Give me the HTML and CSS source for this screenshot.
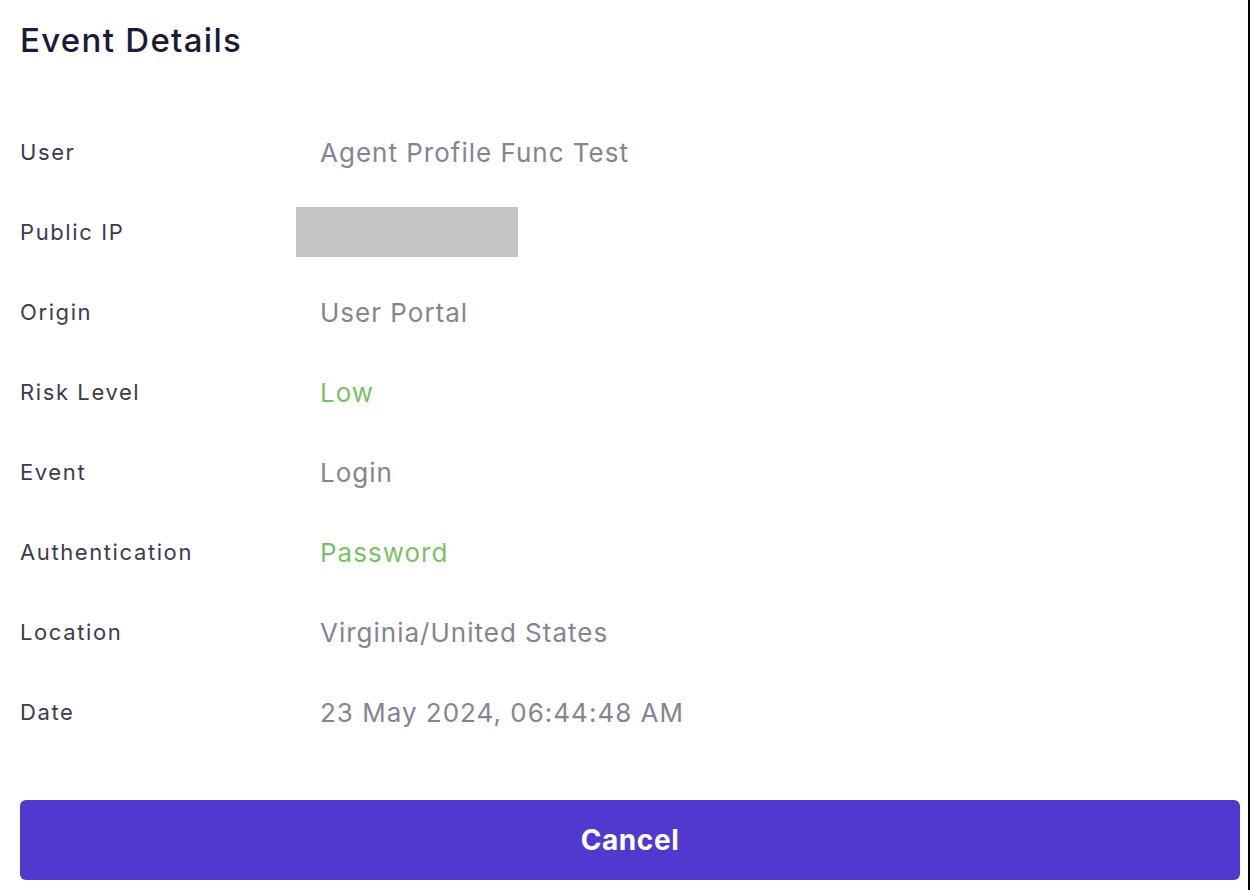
FILE: index.html
```html
<!DOCTYPE html>
<html lang="en">
<head>
<meta charset="utf-8">
<title>Event Details</title>
<link rel="stylesheet" href="styles.css">
</head>
<body>
<div class="panel">
  <h1 class="title">Event Details</h1>
  <dl class="details">
    <div class="row"><dt class="label">User</dt><dd class="value">Agent Profile Func Test</dd></div>
    <div class="row"><dt class="label">Public IP</dt><dd class="value"><span class="redacted"></span></dd></div>
    <div class="row"><dt class="label">Origin</dt><dd class="value">User Portal</dd></div>
    <div class="row"><dt class="label">Risk Level</dt><dd class="value value-good">Low</dd></div>
    <div class="row"><dt class="label">Event</dt><dd class="value">Login</dd></div>
    <div class="row"><dt class="label">Authentication</dt><dd class="value value-good">Password</dd></div>
    <div class="row"><dt class="label">Location</dt><dd class="value">Virginia/United States</dd></div>
    <div class="row"><dt class="label">Date</dt><dd class="value">23 May 2024, 06:44:48 AM</dd></div>
  </dl>
  <button class="btn-cancel" type="button">Cancel</button>
</div>
</body>
</html>
```

FILE: styles.css
```css
* { box-sizing: border-box; }
html, body { margin: 0; padding: 0; background: #ffffff; }
body { font-family: "Inter", "Noto Sans", sans-serif; }

.panel {
  width: 1250px;
  height: 890px;
  padding: 0 8px 0 20px;
  border-right: 2px solid #000000;
  display: flex;
  flex-direction: column;
}

.title {
  margin: 0;
  height: 80px;
  line-height: 80px;
  font-size: 33px;
  font-weight: 500;
  color: #1c1a36;
  letter-spacing: 1.3px;
}

.details {
  margin: 32px 0 0 0;
  display: flex;
  flex-direction: column;
}

.row {
  display: grid;
  grid-template-columns: 300px 1fr;
  align-items: center;
  height: 80px;
}

.label {
  margin: 0;
  font-size: 22px;
  letter-spacing: 1.6px;
  color: #3d3b4e;
}

.value {
  margin: 0;
  font-size: 26px;
  letter-spacing: 1px;
  color: #85848f;
  display: flex;
  align-items: center;
}

.value-good { color: #7bbf69; }

.redacted {
  display: block;
  width: 222px;
  height: 50px;
  margin-left: -24px;
  background: #c4c4c4;
}

.btn-cancel {
  margin-top: 48px;
  height: 80px;
  width: 100%;
  border: none;
  border-radius: 6px;
  background: #5138cf;
  color: #ffffff;
  font-family: "Inter", "Noto Sans", sans-serif;
  font-size: 28px;
  font-weight: 700;
  letter-spacing: 0.6px;
  cursor: pointer;
}
```
